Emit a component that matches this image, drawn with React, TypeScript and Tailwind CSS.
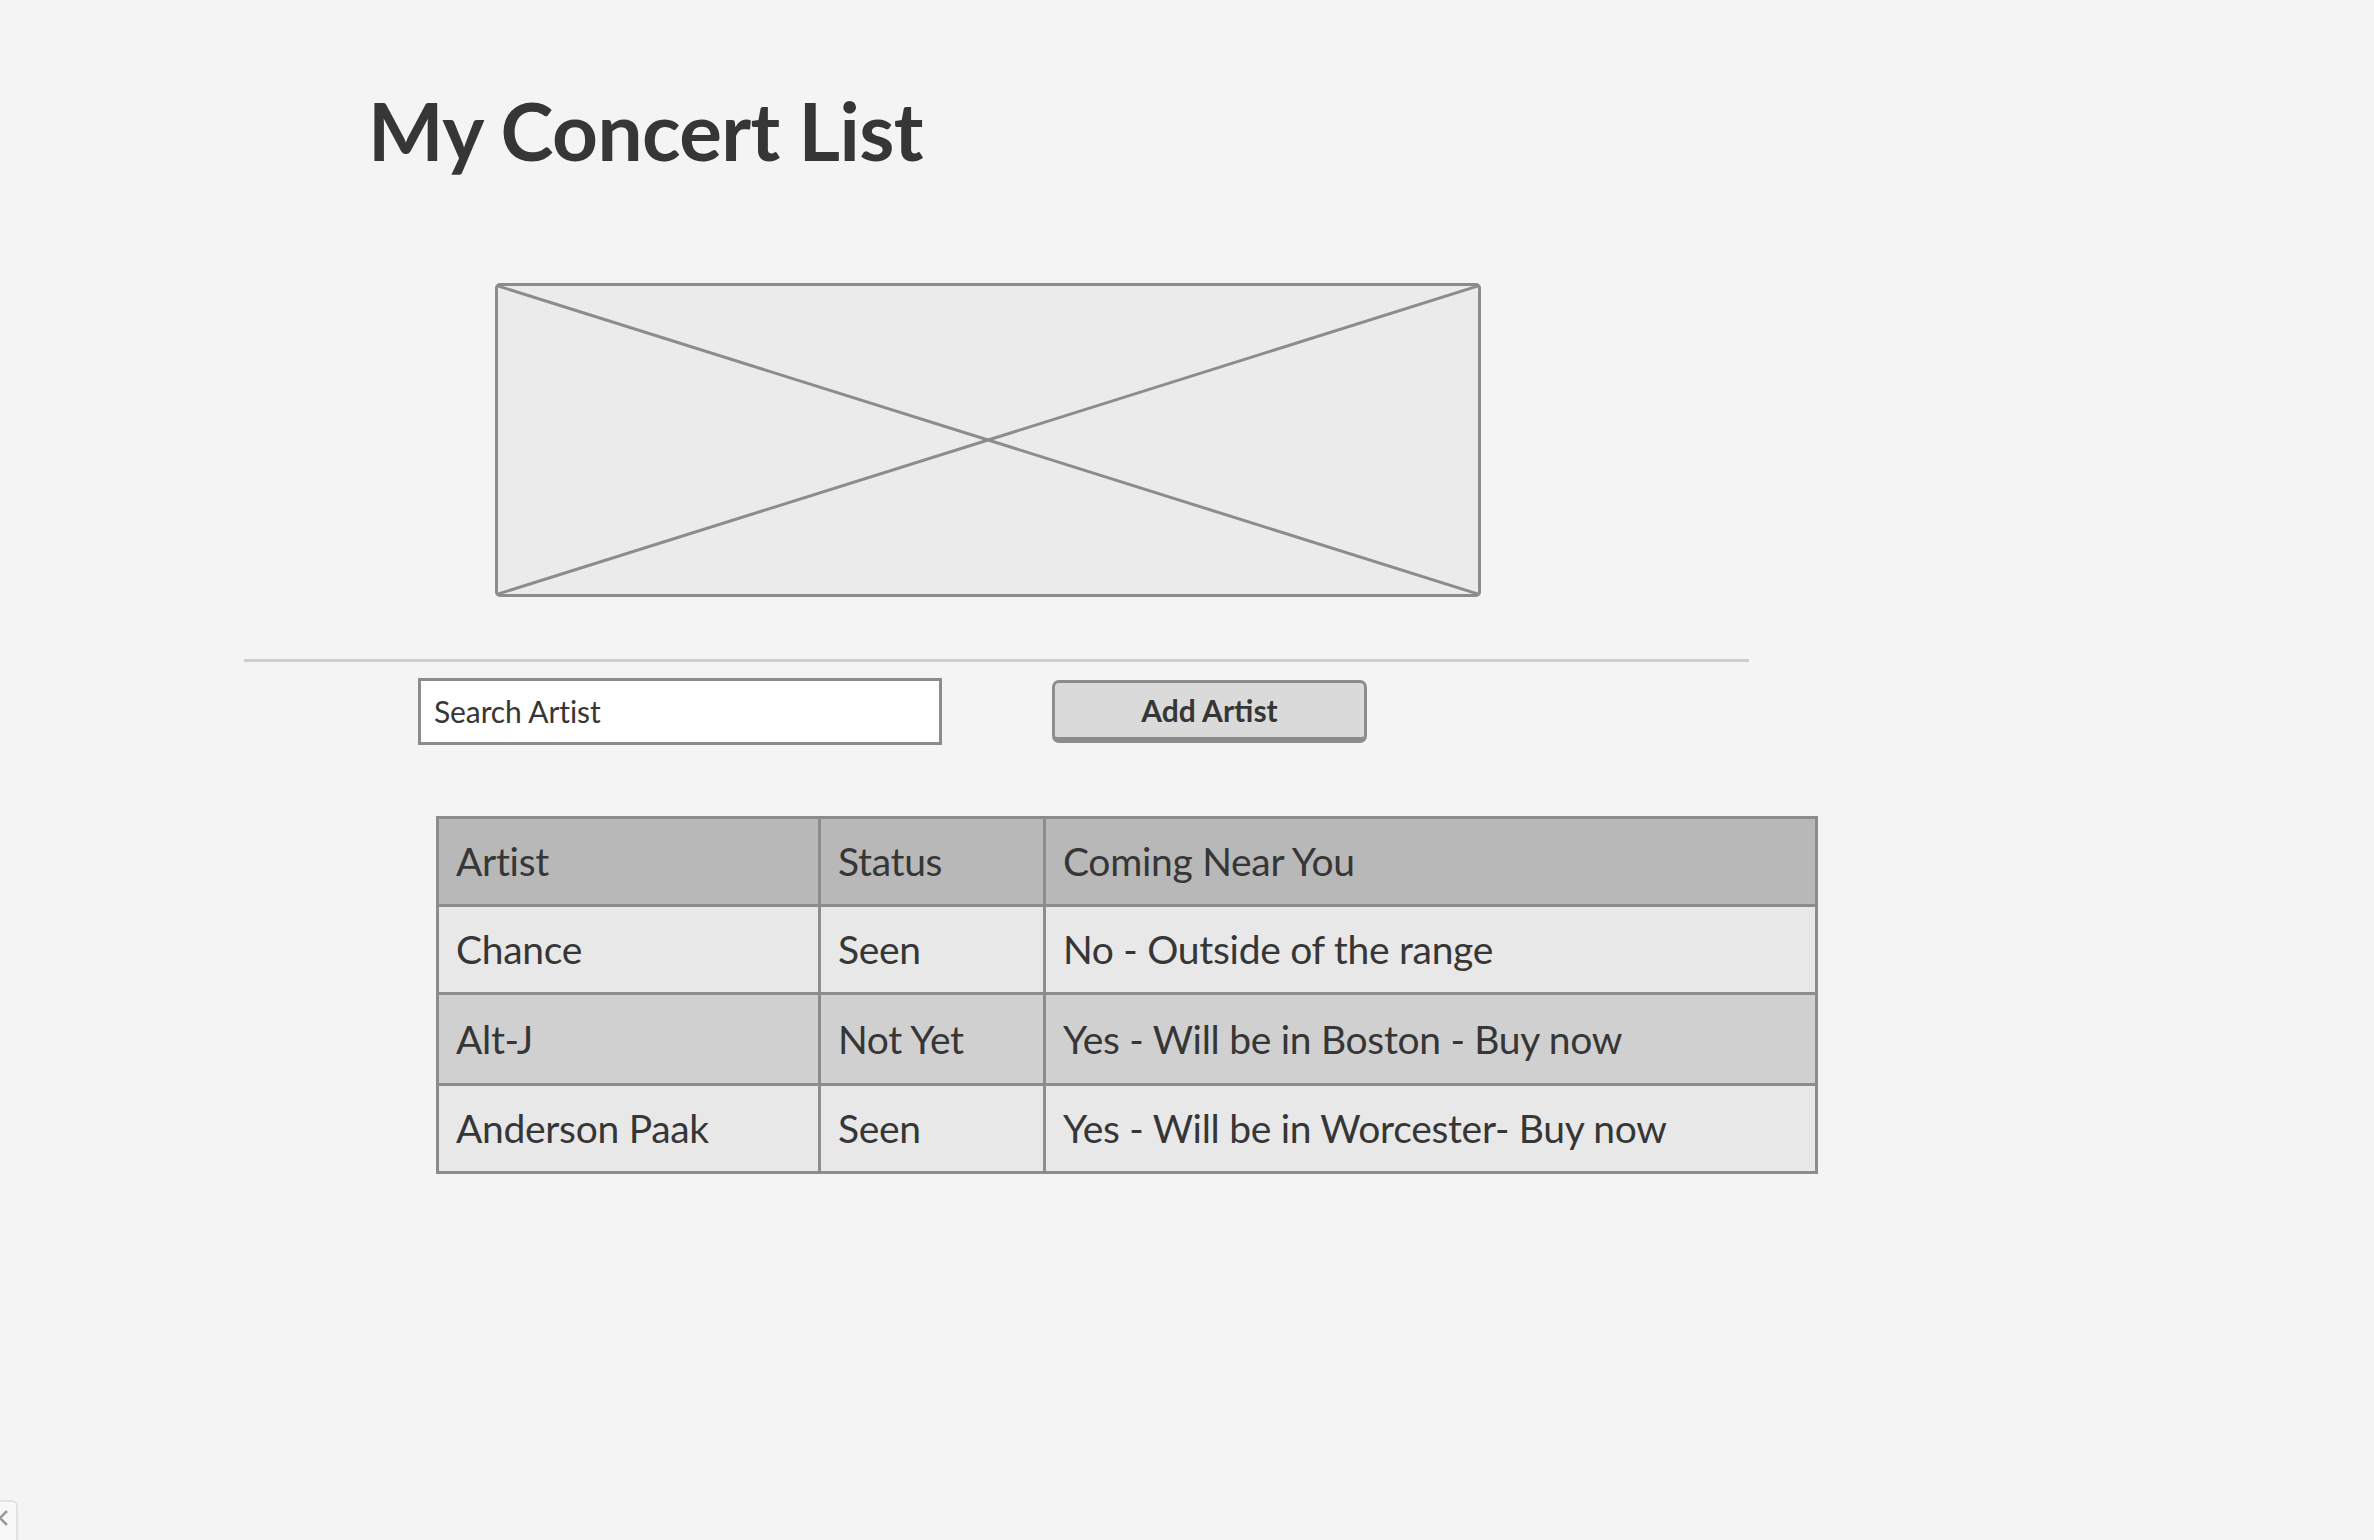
import React from "react";

const rows = [
  { artist: "Chance", status: "Seen", near: "No - Outside of the range", bg: "bg-[#e8e8e8]" },
  { artist: "Alt-J", status: "Not Yet", near: "Yes - Will be in Boston - Buy now", bg: "bg-[#d0d0d0]" },
  { artist: "Anderson Paak", status: "Seen", near: "Yes - Will be in Worcester- Buy now", bg: "bg-[#e8e8e8]" },
];

export default function App() {
  return (
    <div
      className="relative min-h-screen w-full overflow-hidden bg-[#f4f4f4] text-[#363636]"
      style={{ fontFamily: "Lato, 'Open Sans', sans-serif", height: 1540 }}
    >
      <div className="flex flex-col pt-[90px]">
        <h1 className="ml-[368px] text-[80px] font-bold leading-none tracking-[-0.6px]">My Concert List</h1>

        <div className="ml-[495px] mt-[113px] h-[314px] w-[986px] rounded-[5px] border-[3px] border-[#8c8c8c] bg-[#ebebeb]">
          <svg className="h-full w-full" viewBox="0 0 100 100" preserveAspectRatio="none">
            <line x1="0" y1="0" x2="100" y2="100" stroke="#8c8c8c" strokeWidth="3" vectorEffect="non-scaling-stroke" />
            <line x1="100" y1="0" x2="0" y2="100" stroke="#8c8c8c" strokeWidth="3" vectorEffect="non-scaling-stroke" />
          </svg>
        </div>

        <div className="ml-[244px] mt-[62px] h-[3px] w-[1505px] bg-[#cdcdcd]" />

        <div className="ml-[418px] mt-[16px] flex items-start gap-[110px]">
          <div className="flex h-[67px] w-[524px] items-center border-[3px] border-[#8c8c8c] bg-white pl-[13px] text-[30px] tracking-[-0.1px] text-[#363636]">
            Search Artist
          </div>
          <div className="mt-[2px] flex h-[63px] w-[315px] items-center justify-center rounded-[7px] border-[3px] border-b-[6px] border-[#8c8c8c] bg-[#dadada] text-[30px] font-bold text-[#363636]">
            Add Artist
          </div>
        </div>

        <table className="ml-[436px] mt-[71px] w-[1382px] border-collapse text-[39px] tracking-[-0.3px]">
          <thead>
            <tr className="h-[88px] bg-[#b8b8b8]">
              <th className="w-[382px] border-[3px] border-[#8c8c8c] pl-[17px] text-left font-normal">Artist</th>
              <th className="w-[225px] border-[3px] border-[#8c8c8c] pl-[17px] text-left font-normal">Status</th>
              <th className="border-[3px] border-[#8c8c8c] pl-[17px] text-left font-normal">Coming Near You</th>
            </tr>
          </thead>
          <tbody>
            {rows.map((r, i) => (
              <tr key={i} className={`${i === 1 ? "h-[91px]" : "h-[88px]"} ${r.bg}`}>
                <td className="border-[3px] border-[#8c8c8c] pl-[17px]">{r.artist}</td>
                <td className="border-[3px] border-[#8c8c8c] pl-[17px]">{r.status}</td>
                <td className="border-[3px] border-[#8c8c8c] pl-[17px]">{r.near}</td>
              </tr>
            ))}
          </tbody>
        </table>
      </div>

      <div className="absolute left-[-40px] top-[1500px] flex h-[60px] w-[58px] items-start justify-start rounded-[6px] border-2 border-[#e2e2e2] bg-[#f8f8f8]">
        <svg className="ml-[28px] mt-[6px]" width="20" height="20" viewBox="0 0 20 20">
          <path d="M3 3 L17 17 M17 3 L3 17" stroke="#9a9a9a" strokeWidth="2.5" fill="none" />
        </svg>
      </div>
    </div>
  );
}
